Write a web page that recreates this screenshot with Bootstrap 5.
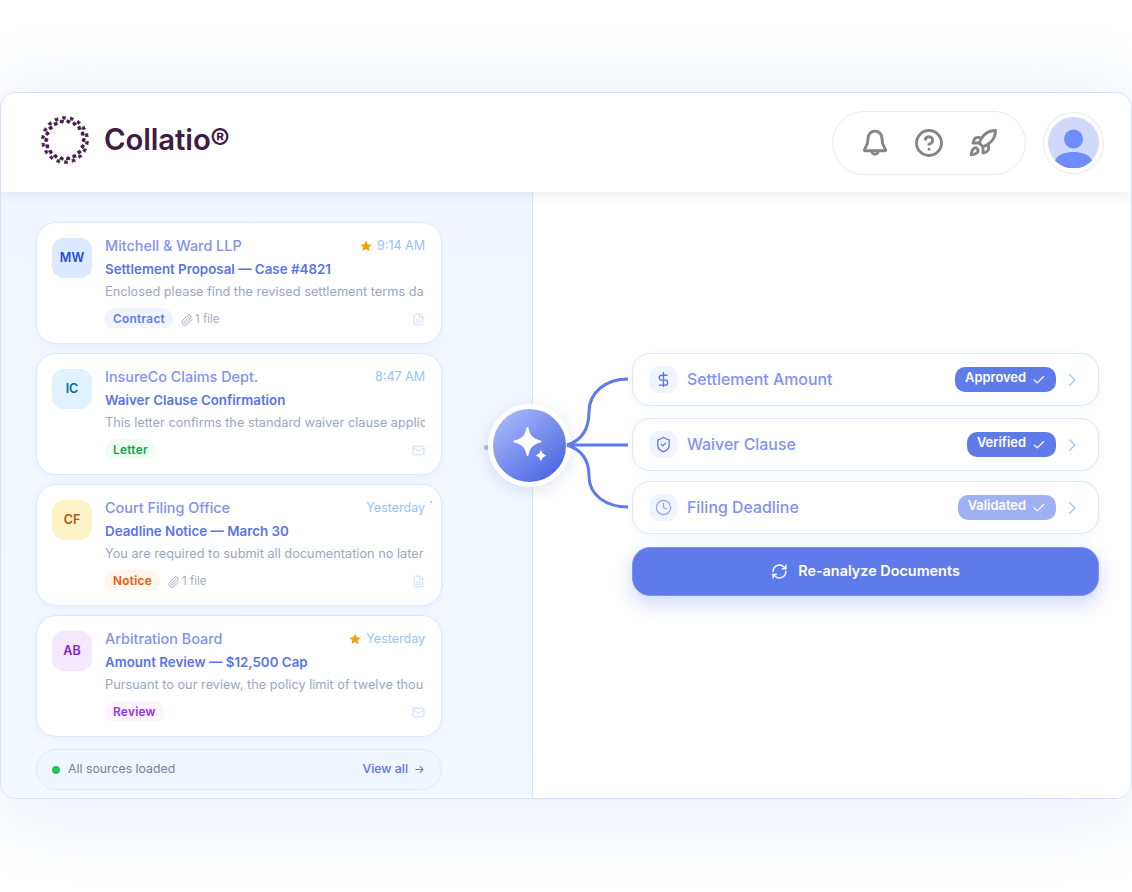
<!DOCTYPE html>
<html lang="en">
<head>
<meta charset="utf-8">
<title>Collatio</title>
<link href="https://cdn.jsdelivr.net/npm/bootstrap@5.3.0/dist/css/bootstrap.min.css" rel="stylesheet">
<style>
html,body{height:892px;overflow:hidden;background:#fff;font-family:Inter,"Liberation Sans",sans-serif}
.win{position:relative;margin-top:92px;width:1132px;height:707px;background:#fff;border:1px solid #cfe2fb;border-radius:16px;box-shadow:0 8px 80px rgba(120,150,235,.2);overflow:hidden}
.top{height:99px;padding:0 27px 0 39px;background:#fff;box-shadow:0 2px 12px rgba(60,70,90,.1);position:relative;z-index:2}
.brand{padding-bottom:5px}
.word{font-size:29.3px;font-weight:600;color:#3f1b45;letter-spacing:-.1px;line-height:1;margin-left:14px}
.pill{width:194px;height:64px;border:1.5px solid #ececee;border-radius:32px;gap:24px;margin-right:17px}
.ico{width:30px;height:30px;fill:none;stroke:#858585;stroke-width:2.3;stroke-linecap:round;stroke-linejoin:round}
.ava{width:61px;height:62px;border:1.5px solid #ececee;border-radius:50%}
.main{height:606px}
.leftp{width:532px;flex:none;padding:30px 90px 0 35px;background:linear-gradient(180deg,#f1f6fe,#f3f8ff);border-right:1px solid #d5e5fb}
.mcard{height:122px;margin-bottom:9px;padding:15px 16px 15px 15px;background:#fff;border:1px solid #dbe8fc;border-radius:20px;box-shadow:0 2px 8px rgba(120,150,235,.07);gap:13px}
.tile{width:40px;height:40px;flex:none;border-radius:12px;font-size:12.5px;font-weight:600}
.t1{background:#dbeafe;color:#1d4ed8}.t2{background:#e0f2fe;color:#0369a1}.t3{background:#fef3c7;color:#b45309}.t4{background:#f3e8ff;color:#7e22ce}
.mtext{margin-top:-1px}
.sender{font-size:14.4px;font-weight:500;color:#7f93ef;line-height:18px}
.stime{font-size:12.5px;color:#93c5fd;line-height:18px;gap:5px}
.subj{font-size:13.35px;font-weight:600;color:#5b74e8;line-height:18px;margin-top:5px;white-space:nowrap}
.prev{font-size:12.75px;color:#9ba7be;line-height:18px;margin-top:5px;white-space:nowrap;overflow:hidden}
.tagline{margin-top:7px;height:23px;gap:8px}
.tag{padding:0 8px;height:23px;line-height:23px;border-radius:12px;font-size:11.8px;font-weight:600;letter-spacing:.3px}
.g1{background:#eff4ff;color:#6279ee}.g2{background:#f0fdf4;color:#16a34a}.g3{background:#fff7ed;color:#ea580c}.g4{background:#fdf4ff;color:#9333ea}
.fnote{font-size:11.5px;color:#a3afc4;gap:2px}
.clip{width:12px;height:12px;fill:none;stroke:#a3afc4;stroke-width:2;stroke-linecap:round;stroke-linejoin:round}
.kind{width:13px;height:13px;fill:none;stroke:#c6dcfb;stroke-width:1.8;stroke-linecap:round;stroke-linejoin:round}
.foot{height:41px;margin-top:12px;padding:0 16px 0 15px;background:#f0f6fe;border:1px solid #dde9fb;border-radius:20px;font-size:12.3px}
.gdot{width:8px;height:8px;background:#22c55e;border-radius:50%;margin-right:8px}
.loaded{color:#74829c}
.vall{color:#5b74e8;font-weight:500;gap:6px}
.rightp{padding:161px 32px 0 99px;background:#fff}
.frow{height:53px;padding:0 19px 0 17px;background:#fff;border:1px solid #d9e7fc;border-radius:18px;box-shadow:0 2px 10px rgba(120,150,235,.07)}
.m12{margin-top:12px}.m9{margin-top:10px}.m13{margin-top:13px}
.sq{width:27px;height:27px;background:#eff4ff;border-radius:9px;margin-right:10px;flex:none}
.sq svg{width:17px;height:17px;fill:none;stroke:#5b74e8;stroke-width:1.8;stroke-linecap:round;stroke-linejoin:round}
.flabel{font-size:15.9px;font-weight:500;color:#7f93ef}
.ok{height:25px;padding:0 10px 2px;background:#5f7bea;color:#fff;border-radius:10px;font-size:12.9px;font-weight:600;gap:6px;line-height:1}
.ok.faded{background:#9fb0f3}
.ok svg{width:14px;height:14px;margin-top:2px;fill:none;stroke:#fff;stroke-width:2;stroke-linecap:round;stroke-linejoin:round}
.chev{width:14px;height:14px;margin-left:9px;fill:none;stroke:#93c5fd;stroke-width:2;stroke-linecap:round;stroke-linejoin:round}
.goBtn{height:49px;width:100%;padding-bottom:7px;background:#5f7bea;border:1px solid #7e95ee;border-radius:18px;color:#fff;font-size:14.4px;font-weight:600;gap:10px;box-shadow:0 8px 20px rgba(95,123,234,.3)}
.goBtn:hover{background:#5f7bea;color:#fff}
.goBtn svg{width:17px;height:17px;fill:none;stroke:#fff;stroke-width:2;stroke-linecap:round;stroke-linejoin:round}
.wires{position:absolute;left:560px;top:270px;width:70px;height:170px;z-index:5;fill:none;stroke:#5f7bea;stroke-width:3}
.node{position:absolute;left:487px;top:311px;width:83px;height:83px;z-index:4;border:5px solid #fff;border-radius:50%;background:linear-gradient(140deg,#b3c0fc,#3e5de0);box-shadow:0 4px 16px rgba(90,110,180,.18)}
.node svg{width:73px;height:73px;fill:#fff}
.spark{position:absolute;border-radius:50%;background:#93c5fd}
.s1{left:483px;top:352px;width:5px;height:5px}
.s2{left:429px;top:408px;width:2px;height:2px}
</style>
</head>
<body>
<div class="win">
  <header class="top d-flex align-items-center justify-content-between">
    <div class="brand d-flex align-items-center">
      <svg width="50" height="50" viewBox="-26 -26 52 52" fill="#45204b" stroke="#45204b" stroke-width=".5" stroke-linejoin="round" aria-label="logo">
        <defs>
          <g id="pet"><path d="M-2.600 -24.800l1.700 .6l1.700 -.4l-.5 3.300l-2.900 -.8z"/><path d="M2.600 -21.300l1.500 .9l1.700 .1l-1.600 2.900l-2.500 -1.500z"/><path d="M-4.800 -20.300l1.600 .4l1.600 -.4l-.7 3l-2.700 -.7z"/></g>
        </defs>
        <use href="#pet"/><use href="#pet" transform="rotate(20)"/><use href="#pet" transform="rotate(40)"/><use href="#pet" transform="rotate(60)"/><use href="#pet" transform="rotate(80)"/><use href="#pet" transform="rotate(100)"/><use href="#pet" transform="rotate(120)"/><use href="#pet" transform="rotate(140)"/><use href="#pet" transform="rotate(160)"/><use href="#pet" transform="rotate(180)"/><use href="#pet" transform="rotate(200)"/><use href="#pet" transform="rotate(220)"/><use href="#pet" transform="rotate(240)"/><use href="#pet" transform="rotate(260)"/><use href="#pet" transform="rotate(280)"/><use href="#pet" transform="rotate(300)"/><use href="#pet" transform="rotate(320)"/><use href="#pet" transform="rotate(340)"/>
      </svg>
      <span class="word">Collatio®</span>
    </div>
    <div class="d-flex align-items-center">
      <div class="pill d-flex align-items-center justify-content-center">
        <svg class="ico" viewBox="0 0 24 24"><path d="M6.500 8a5.500 5.500 0 0 1 11 0c0 6 2.700 8 3 9.500a.6.600 0 0 1-.6.700H4.100a.6.600 0 0 1-.6-.7c.3-1.500 3-3.500 3-9.500"/><path d="M9.500 18.500a2.500 2.500 0 0 0 5 0"/></svg>
        <svg class="ico" viewBox="0 0 24 24"><circle cx="12" cy="12" r="10"/><path d="M9.090 9a3 3 0 0 1 5.830 1c0 2-3 3-3 3"/><path d="M12 17h.01"/></svg>
        <svg class="ico" viewBox="0 0 24 24"><path d="M4.500 16.500c-1.500 1.260-2 5-2 5s3.740-.5 5-2c.71-.84.7-2.130-.09-2.910a2.180 2.180 0 0 0-2.910-.09z"/><path d="m12 15-3-3a22 22 0 0 1 2-3.950A12.880 12.880 0 0 1 22 2c0 2.720-.78 7.500-6 11a22.350 22.350 0 0 1-4 2z"/><path d="M9 12H4s.55-3.030 2-4c1.620-1.080 5 0 5 0"/><path d="M12 15v5s3.030-.55 4-2c1.080-1.620 0-5 0-5"/></svg>
      </div>
      <div class="ava d-flex align-items-center justify-content-center">
        <svg width="51" height="51" viewBox="0 0 51 51"><circle cx="25.500" cy="25.500" r="25.500" fill="#cfd9f9"/><circle cx="25.500" cy="22" r="9.500" fill="#6f8cff"/><path d="M7 43.500c3-6.500 11-8.500 18.500-8.500S41 37 44 43.500a25.500 25.500 0 0 1-37 0z" fill="#6f8cff"/></svg>
      </div>
    </div>
  </header>

  <div class="main d-flex">
    <div class="leftp">
      <article class="mcard d-flex">
        <div class="tile t1 d-flex align-items-center justify-content-center">MW</div>
        <div class="mtext flex-grow-1 overflow-hidden">
          <div class="d-flex justify-content-between align-items-center"><span class="sender">Mitchell &amp; Ward LLP</span><span class="stime d-flex align-items-center"><svg width="12" height="12" viewBox="0 0 24 24" fill="#f59e0b"><path d="M12 1l3.400 7.300 7.900 1-5.800 5.500 1.500 7.900L12 17.800l-7 3.900 1.500-7.900L.7 9.300l7.900-1z"/></svg>9:14 AM</span></div>
          <div class="subj">Settlement Proposal — Case #4821</div>
          <div class="prev">Enclosed please find the revised settlement terms da</div>
          <div class="tagline d-flex align-items-center"><span class="tag g1">Contract</span><span class="fnote d-flex align-items-center"><svg class="clip" viewBox="0 0 24 24"><path d="M21.400 11.600l-9.200 9.200a6 6 0 0 1-8.500-8.500l9.200-9.200a4 4 0 0 1 5.700 5.700l-9.200 9.200a2 2 0 0 1-2.800-2.800l8.500-8.500"/></svg>1 file</span>
            <svg class="kind ms-auto" viewBox="0 0 24 24"><path d="M14 2H6a2 2 0 0 0-2 2v16a2 2 0 0 0 2 2h12a2 2 0 0 0 2-2V8z"/><path d="M14 2v6h6M8 13h8M8 17h8"/></svg></div>
        </div>
      </article>
      <article class="mcard d-flex">
        <div class="tile t2 d-flex align-items-center justify-content-center">IC</div>
        <div class="mtext flex-grow-1 overflow-hidden">
          <div class="d-flex justify-content-between align-items-center"><span class="sender">InsureCo Claims Dept.</span><span class="stime d-flex align-items-center">8:47 AM</span></div>
          <div class="subj">Waiver Clause Confirmation</div>
          <div class="prev">This letter confirms the standard waiver clause applic</div>
          <div class="tagline d-flex align-items-center"><span class="tag g2">Letter</span>
            <svg class="kind ms-auto" viewBox="0 0 24 24"><rect x="2" y="4" width="20" height="16" rx="2"/><path d="m22 7-10 6L2 7"/></svg></div>
        </div>
      </article>
      <article class="mcard d-flex">
        <div class="tile t3 d-flex align-items-center justify-content-center">CF</div>
        <div class="mtext flex-grow-1 overflow-hidden">
          <div class="d-flex justify-content-between align-items-center"><span class="sender">Court Filing Office</span><span class="stime d-flex align-items-center">Yesterday</span></div>
          <div class="subj">Deadline Notice — March 30</div>
          <div class="prev">You are required to submit all documentation no later</div>
          <div class="tagline d-flex align-items-center"><span class="tag g3">Notice</span><span class="fnote d-flex align-items-center"><svg class="clip" viewBox="0 0 24 24"><path d="M21.400 11.600l-9.200 9.200a6 6 0 0 1-8.500-8.500l9.200-9.200a4 4 0 0 1 5.700 5.700l-9.200 9.200a2 2 0 0 1-2.800-2.800l8.500-8.500"/></svg>1 file</span>
            <svg class="kind ms-auto" viewBox="0 0 24 24"><path d="M14 2H6a2 2 0 0 0-2 2v16a2 2 0 0 0 2 2h12a2 2 0 0 0 2-2V8z"/><path d="M14 2v6h6M8 13h8M8 17h8"/></svg></div>
        </div>
      </article>
      <article class="mcard d-flex">
        <div class="tile t4 d-flex align-items-center justify-content-center">AB</div>
        <div class="mtext flex-grow-1 overflow-hidden">
          <div class="d-flex justify-content-between align-items-center"><span class="sender">Arbitration Board</span><span class="stime d-flex align-items-center"><svg width="12" height="12" viewBox="0 0 24 24" fill="#f59e0b"><path d="M12 1l3.400 7.300 7.900 1-5.800 5.500 1.500 7.900L12 17.800l-7 3.900 1.500-7.900L.7 9.300l7.900-1z"/></svg>Yesterday</span></div>
          <div class="subj">Amount Review — $12,500 Cap</div>
          <div class="prev">Pursuant to our review, the policy limit of twelve thou</div>
          <div class="tagline d-flex align-items-center"><span class="tag g4">Review</span>
            <svg class="kind ms-auto" viewBox="0 0 24 24"><rect x="2" y="4" width="20" height="16" rx="2"/><path d="m22 7-10 6L2 7"/></svg></div>
        </div>
      </article>
      <div class="foot d-flex align-items-center">
        <span class="gdot"></span><span class="loaded">All sources loaded</span>
        <span class="vall ms-auto d-flex align-items-center">View all <svg width="11" height="11" viewBox="0 0 24 24" fill="none" stroke="#5b74e8" stroke-width="2.200" stroke-linecap="round" stroke-linejoin="round"><path d="M4 12h16M13 5l7 7-7 7"/></svg></span>
      </div>
    </div>

    <div class="rightp flex-grow-1">
      <div class="frow d-flex align-items-center">
        <span class="sq d-flex align-items-center justify-content-center"><svg viewBox="0 0 24 24"><path d="M12 2v20M17 6H9.500a3.500 3.500 0 0 0 0 7h5a3.500 3.500 0 0 1 0 7H6"/></svg></span>
        <span class="flabel">Settlement Amount</span>
        <span class="ok ms-auto d-flex align-items-center">Approved <svg viewBox="0 0 24 24"><path d="M20 6 9 17l-5-5"/></svg></span>
        <svg class="chev" viewBox="0 0 24 24"><path d="m8 3 9 9-9 9"/></svg>
      </div>
      <div class="frow m12 d-flex align-items-center">
        <span class="sq d-flex align-items-center justify-content-center"><svg viewBox="0 0 24 24"><path d="M20 13c0 5-3.500 7.500-7.700 9a1 1 0 0 1-.6 0C7.500 20.500 4 18 4 13V6a1 1 0 0 1 1-1c2 0 4.500-1.200 6.200-2.700a1.200 1.200 0 0 1 1.600 0C14.500 3.800 17 5 19 5a1 1 0 0 1 1 1z"/><path d="m9 12 2 2 4-4"/></svg></span>
        <span class="flabel">Waiver Clause</span>
        <span class="ok ms-auto d-flex align-items-center">Verified <svg viewBox="0 0 24 24"><path d="M20 6 9 17l-5-5"/></svg></span>
        <svg class="chev" viewBox="0 0 24 24"><path d="m8 3 9 9-9 9"/></svg>
      </div>
      <div class="frow m9 d-flex align-items-center">
        <span class="sq d-flex align-items-center justify-content-center"><svg viewBox="0 0 24 24" opacity=".6"><circle cx="12" cy="12" r="10"/><path d="M12 6v6l4 2"/></svg></span>
        <span class="flabel">Filing Deadline</span>
        <span class="ok faded ms-auto d-flex align-items-center">Validated <svg viewBox="0 0 24 24"><path d="M20 6 9 17l-5-5"/></svg></span>
        <svg class="chev" viewBox="0 0 24 24"><path d="m8 3 9 9-9 9"/></svg>
      </div>
      <button type="button" class="btn goBtn m13 d-flex align-items-center justify-content-center">
        <svg viewBox="0 0 24 24"><path d="M3 12a9 9 0 0 1 15-6.700L21 8"/><path d="M21 3v5h-5"/><path d="M21 12a9 9 0 0 1-15 6.700L3 16"/><path d="M3 21v-5h5"/></svg>
        Re-analyze Documents
      </button>
    </div>
  </div>

  <svg class="wires" viewBox="560 270 70 170" aria-hidden="true"><path d="M566 352C582 347 588 335 588 319C588 299 605 286 627 286"/><path d="M566 352H627"/><path d="M566 352C582 357 588 369 588 383C588 402 605 414 627 414"/></svg>
  <div class="node d-flex align-items-center justify-content-center">
    <svg viewBox="0 0 73 73"><path d="M34.500 19C36 27 39 30.500 47.500 32.500C39 34.500 36 38 34.500 46C33 38 30 34.500 21.500 32.500C30 30.500 33 27 34.500 19Z" stroke="#fff" stroke-width="2" stroke-linejoin="round"/><path d="M48 40C48.600 43.500 49.800 45 53.500 46.500C49.800 48 48.600 49.500 48 53C47.400 49.500 46.200 48 42.500 46.500C46.200 45 47.400 43.500 48 40Z"/></svg>
  </div>
  <span class="spark s1"></span><span class="spark s2"></span>
</div>
<script src="https://cdn.jsdelivr.net/npm/bootstrap@5.3.0/dist/js/bootstrap.bundle.min.js"></script>
</body>
</html>
